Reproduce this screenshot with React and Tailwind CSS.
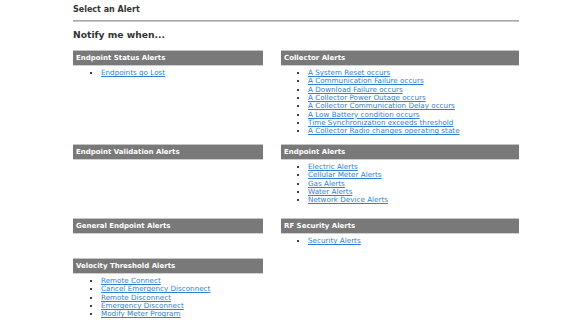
import React from "react";

const font = { fontFamily: '"DejaVu Sans", Verdana, sans-serif' };

function Section({ title, items, wide }) {
  return (
    <div>
      <div className="h-[16px] bg-[#797979] border-t border-t-[#c4c4c4] border-b border-b-[#d0d0d0] flex items-center pl-[3px] text-white font-bold text-[7px] leading-none">
        {title}
      </div>
      {items && items.length > 0 && (
        <ul className={`mt-[3px] list-disc ${wide ? "pl-[27px]" : "pl-[28px]"} text-[7.2px] leading-[8.35px]`}>
          {items.map((t) => (
            <li key={t} className="marker:text-black">
              <a href="#" className="text-[#2f7fd6] underline">{t}</a>
            </li>
          ))}
        </ul>
      )}
    </div>
  );
}

export default function App() {
  return (
    <div className="w-[588px] h-[327px] bg-white overflow-hidden" style={font}>
      <div className="ml-[73px] w-[446px] pt-[5px]">
        <div className="text-[8px] font-bold text-[#333] leading-[10px]">Select an Alert</div>
        <div className="mt-[5px] h-[2px] border-t border-t-[#a8a8a8] border-b border-b-[#c8c8c8]"></div>
        <div className="mt-[6px] text-[9.2px] font-bold text-[#333] leading-[13px]">Notify me when...</div>
        <div className="mt-[9px] grid grid-cols-[190px_238px] gap-x-[18px]">
          <div className="h-[94px]">
            <Section title="Endpoint Status Alerts" items={["Endpoints go Lost"]} />
          </div>
          <div className="h-[94px]">
            <Section
              title="Collector Alerts"
              wide
              items={[
                "A System Reset occurs",
                "A Communication Failure occurs",
                "A Download Failure occurs",
                "A Collector Power Outage occurs",
                "A Collector Communication Delay occurs",
                "A Low Battery condition occurs",
                "Time Synchronization exceeds threshold",
                "A Collector Radio changes operating state",
              ]}
            />
          </div>
          <div className="h-[74px]">
            <Section title="Endpoint Validation Alerts" items={[]} />
          </div>
          <div className="h-[74px]">
            <Section
              title="Endpoint Alerts"
              wide
              items={["Electric Alerts", "Cellular Meter Alerts", "Gas Alerts", "Water Alerts", "Network Device Alerts"]}
            />
          </div>
          <div className="h-[40px]">
            <Section title="General Endpoint Alerts" items={[]} />
          </div>
          <div className="h-[40px]">
            <Section title="RF Security Alerts" wide items={["Security Alerts"]} />
          </div>
          <div>
            <Section
              title="Velocity Threshold Alerts"
              items={["Remote Connect", "Cancel Emergency Disconnect", "Remote Disconnect", "Emergency Disconnect", "Modify Meter Program"]}
            />
          </div>
          <div></div>
        </div>
      </div>
    </div>
  );
}
